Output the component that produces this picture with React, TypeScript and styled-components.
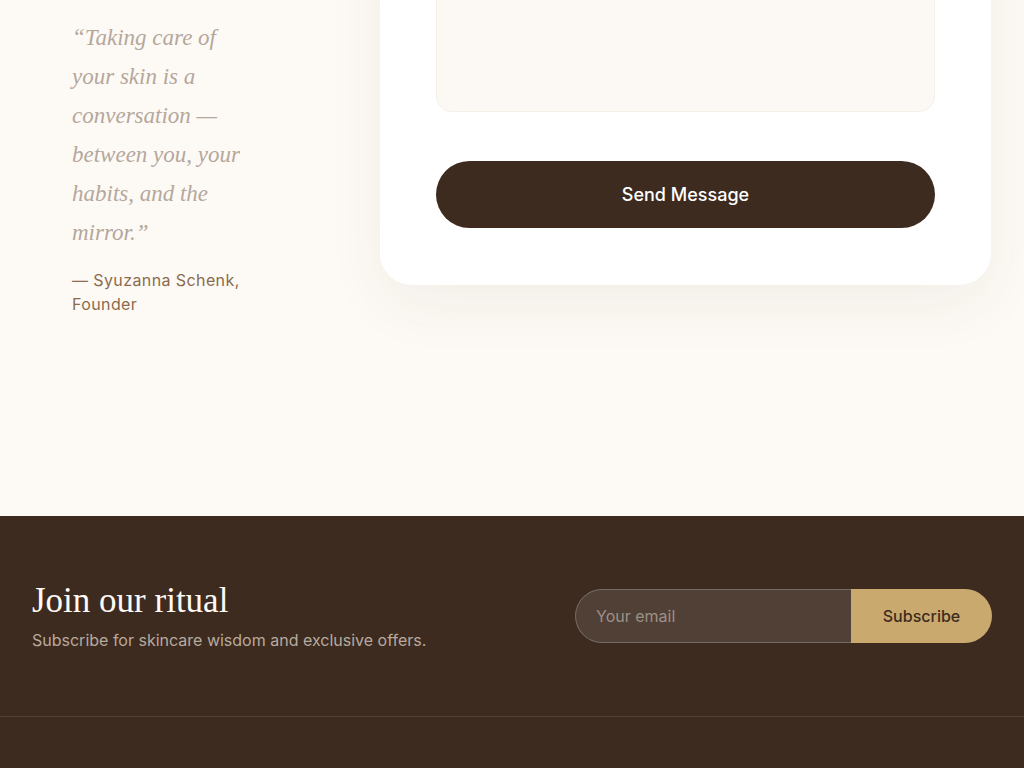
import styled, { createGlobalStyle } from "styled-components";

const GlobalStyle = createGlobalStyle`
    html, body {
        margin: 0;
        padding: 0;
        background: #fdfaf5;
    }
    * {
        box-sizing: border-box;
    }
`

export default function App() {
    return (
        <>
            <GlobalStyle />
            <Page>
                <ContactSection>
                    <QuoteColumn>
                        <Quote>“Taking care of your skin is a conversation — between you, your habits, and the mirror.”</Quote>
                        <Attribution>— Syuzanna Schenk, Founder</Attribution>
                    </QuoteColumn>
                    <FormCard>
                        <MessageArea placeholder="" />
                        <SendButton type="button">Send Message</SendButton>
                    </FormCard>
                </ContactSection>
                <Footer>
                    <NewsletterRow>
                        <NewsletterText>
                            <NewsletterTitle>Join our ritual</NewsletterTitle>
                            <NewsletterSub>Subscribe for skincare wisdom and exclusive offers.</NewsletterSub>
                        </NewsletterText>
                        <SubscribeForm onSubmit={(e) => e.preventDefault()}>
                            <EmailInput type="email" placeholder="Your email" />
                            <SubscribeButton type="submit">Subscribe</SubscribeButton>
                        </SubscribeForm>
                    </NewsletterRow>
                    <FooterDivider />
                    <FooterBottom />
                </Footer>
            </Page>
        </>
    )
}

const Page = styled.div`
    margin-top: -94px;
    font-family: Inter, "Noto Sans", sans-serif;
`

const ContactSection = styled.section`
    display: grid;
    grid-template-columns: 190px 1fr;
    column-gap: 118px;
    align-items: start;
    padding: 0 33px 200px 72px;
    background: #fdfaf5;
`

const QuoteColumn = styled.div`
    padding-top: 112px;
`

const Quote = styled.blockquote`
    margin: 0;
    width: 180px;
    font-family: "Liberation Serif", "DejaVu Serif", serif;
    font-style: italic;
    font-size: 23px;
    line-height: 39px;
    color: #b5a79c;
`

const Attribution = styled.p`
    margin: 16px 0 0;
    font-size: 16px;
    line-height: 24px;
    letter-spacing: 0.4px;
    color: #8b6b4f;
`

const FormCard = styled.div`
    background: #ffffff;
    border-radius: 32px;
    padding: 56px 56px 57px;
    box-shadow: 0 20px 60px rgba(61, 43, 31, 0.06);
    display: flex;
    flex-direction: column;
`

const MessageArea = styled.textarea`
    display: block;
    height: 150px;
    width: 100%;
    resize: none;
    background: #fcf9f4;
    border: 1px solid #f5efe6;
    border-radius: 16px;
    font-family: inherit;
    outline: none;
`

const SendButton = styled.button`
    margin-top: 49px;
    height: 67px;
    width: 100%;
    border: none;
    border-radius: 999px;
    background: #3d2b1f;
    color: #ffffff;
    font-family: Inter, sans-serif;
    font-size: 18px;
    font-weight: 500;
    cursor: pointer;
`

const Footer = styled.footer`
    background: #3d2b20;
    padding: 0 32px;
`

const NewsletterRow = styled.div`
    display: flex;
    align-items: center;
    justify-content: space-between;
    padding: 64px 0;
    height: 200px;
`

const NewsletterText = styled.div`
    display: flex;
    flex-direction: column;
`

const NewsletterTitle = styled.h3`
    margin: 0;
    font-family: "Liberation Serif", "DejaVu Serif", serif;
    font-weight: 400;
    font-size: 35px;
    line-height: 40px;
    color: #fdfaf5;
`

const NewsletterSub = styled.p`
    margin: 7px 0 0;
    font-size: 16px;
    line-height: 24px;
    color: #b7aa9d;
`

const SubscribeForm = styled.form`
    display: flex;
    height: 54px;
    width: 417px;
`

const EmailInput = styled.input`
    flex: 1;
    min-width: 0;
    height: 100%;
    padding: 0 20px;
    background: rgba(255, 255, 255, 0.1);
    border: 1px solid rgba(255, 255, 255, 0.22);
    border-right: none;
    border-radius: 999px 0 0 999px;
    color: #fdfaf5;
    font-family: Inter, sans-serif;
    font-size: 16px;
    outline: none;

    &::placeholder {
        color: #9d9088;
    }
`

const SubscribeButton = styled.button`
    width: 141px;
    height: 100%;
    border: none;
    border-radius: 0 999px 999px 0;
    background: #c9a96e;
    color: #3d2b1f;
    font-family: Inter, sans-serif;
    font-size: 16px;
    font-weight: 500;
    cursor: pointer;
`

const FooterDivider = styled.hr`
    margin: 0 -32px;
    border: none;
    height: 1px;
    background: rgba(255, 255, 255, 0.1);
`

const FooterBottom = styled.div`
    height: 120px;
`
